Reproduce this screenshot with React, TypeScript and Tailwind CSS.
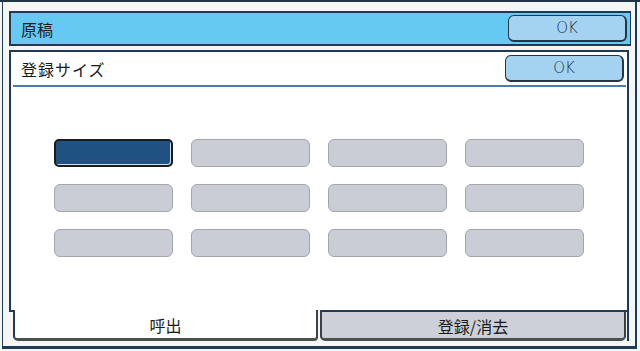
const jp = { fontFamily: '"Noto Sans CJK JP", "Noto Sans", sans-serif' };
const latin = { fontFamily: '"DejaVu Sans", "Liberation Sans", sans-serif' };

const sizes = Array.from({ length: 12 }, (_, i) => i);

function OkButton() {
  return (
    <button
      className="flex h-[27px] w-[119px] items-center justify-center rounded-[6px] border border-r-2 border-b-2 border-[#2a3440] bg-[#a3d3f1] text-[15px] font-extralight leading-none text-[#1a2a44]"
      style={latin}
    >
      OK
    </button>
  );
}

export default function App() {
  return (
    <div
      className="h-[351px] w-[640px] overflow-hidden border-t-2 border-[#1f3547] bg-[#f4f5f5] text-[#1a1a1a]"
      style={jp}
    >
      <div className="ml-[2px] h-[347px] w-[635px] border-l border-r-2 border-b-[3px] border-[#1f3a55] pl-[6px] pt-[9px]">
        {/* Header bar */}
        <div className="flex h-[35px] w-[622px] items-center justify-between border-2 border-r border-[#1f3a55] bg-[#66c9f1] pl-[10px] pr-[3px]">
          <span className="text-[16px] leading-none">原稿</span>
          <OkButton />
        </div>

        {/* Panel */}
        <div className="mt-[4px] w-[620px]">
          <div className="h-[260px] border-x-2 border-t-2 border-[#1f3a55] bg-white">
            <div className="flex h-[33px] items-center justify-between pl-[10px] pr-[3px]">
              <span className="text-[16px] leading-none tracking-[1px]">登録サイズ</span>
              <OkButton />
            </div>
            <div className="ml-[2px] mr-[1px] h-[2px] bg-[#4a7ca6]" />

            <div className="flex justify-center pt-[52px]">
              <div className="grid grid-cols-4 gap-x-[18px] gap-y-[17px]">
                {sizes.map((i) =>
                  i === 0 ? (
                    <div
                      key={i}
                      className="h-[28px] w-[119px] rounded-[5px] border-2 border-[#1c1c1c] bg-[#1f5282] shadow-[inset_-1px_-1px_0_#cfe0ee]"
                    />
                  ) : (
                    <div
                      key={i}
                      className="h-[28px] w-[119px] rounded-[6px] border border-[#a3a6ad] bg-[#cacdd5]"
                    />
                  )
                )}
              </div>
            </div>
          </div>

          {/* Tabs */}
          <div className="flex h-[31px]">
            <div className="w-[4px] border-t-2 border-[#1f3a55]" />
            <div className="flex w-[305px] items-center justify-center rounded-bl-[5px] rounded-br-[4px] border-l-2 border-r-2 border-b-[3px] border-l-[#1f3a55] border-r-[#3a4046] border-b-[#4a504f] bg-white pt-[2px] text-[16px] leading-none">
              呼出
            </div>
            <div className="w-[2px]" />
            <div className="flex w-[306px] items-center justify-center rounded-b-[5px] border-x-2 border-t-2 border-b-[3px] border-t-[#1f3a55] border-x-[#3a4046] border-b-[#4a504f] bg-[#cdd0d6] pt-[1px] text-[16px] leading-none">
              登録/消去
            </div>
            <div className="w-[3px] border-t-2 border-r-2 border-[#1f3a55]" />
          </div>
        </div>
      </div>
    </div>
  );
}
